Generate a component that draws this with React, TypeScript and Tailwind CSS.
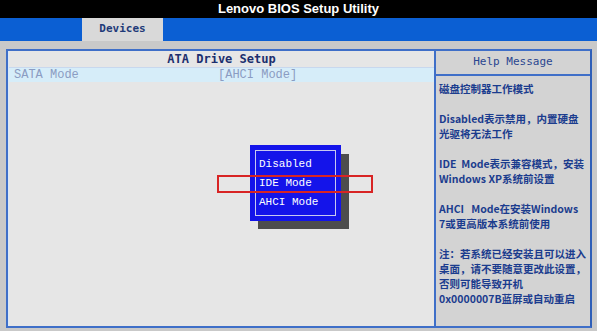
const help = [
  ['磁盘控制器工作模式'],
  ['Disabled表示禁用，内置硬盘', '光驱将无法工作'],
  ['IDE  Mode表示兼容模式，安装', 'Windows XP系统前设置'],
  ['AHCI   Mode在安装Windows', '7或更高版本系统前使用'],
  ['注：若系统已经安装且可以进入', '桌面，请不要随意更改此设置，', '否则可能导致开机', '0x0000007B蓝屏或自动重启'],
];

const options = ['Disabled', 'IDE Mode', 'AHCI Mode'];

export default function App() {
  return (
    <div className="relative w-[597px] h-[331px] overflow-hidden flex flex-col bg-[#c9c9c9]">
      {/* title bar */}
      <div className="h-[18px] bg-black flex items-center justify-center text-white text-[13px] font-bold" style={{ fontFamily: '"Liberation Sans", Arial, sans-serif' }}>
        Lenovo BIOS Setup Utility
      </div>

      {/* menu bar */}
      <div className="h-[23px] bg-[#0b5fd3] flex pl-[82px]">
        <div className="w-[81px] bg-[#d9d9d9] flex items-center justify-center text-[11px] font-bold text-[#1e3a78]" style={{ fontFamily: '"DejaVu Sans Mono", monospace' }}>
          Devices
        </div>
      </div>

      {/* body */}
      <div className="flex-1 pl-[6px] pr-[5px] pt-[8px] pb-[3px]">
        <div className="h-full flex border-2 border-[#3f6fc8] border-r-[#2f5fb8]">
          {/* left panel */}
          <div className="flex-1 flex flex-col bg-[#e6e6e6] border-l border-[#d8e8fa]">
            <div className="h-[17px] flex items-center justify-center text-[12px] font-bold text-[#1c2f6e] border-b border-[#c8d8ee]" style={{ fontFamily: '"DejaVu Sans Mono", monospace' }}>
              ATA Drive Setup
            </div>
            <div className="h-[14px] flex items-center bg-[#d6edf9] text-[12px] text-[#8b9cc2] pl-[5px]" style={{ fontFamily: '"Liberation Mono", monospace' }}>
              <span className="w-[204px]">SATA Mode</span>
              <span>[AHCI Mode]</span>
            </div>
          </div>

          {/* help panel */}
          <div className="w-[156px] flex flex-col bg-[#d3d3d3] border-l-2 border-[#3f6fc8]">
            <div className="h-[25px] flex items-center justify-center text-[11px] text-[#2a4690] border-b-2 border-[#3f6fc8]" style={{ fontFamily: '"DejaVu Sans Mono", monospace' }}>
              Help Message
            </div>
            <div className="flex flex-col gap-[15px] pl-[3px] pt-[5px] text-[10.5px] leading-[15px] font-bold text-[#1b3c8e]" style={{ fontFamily: '"Noto Sans CJK SC", "Noto Sans", sans-serif' }}>
              {help.map((para, i) => (
                <div key={i}>
                  {para.map((line, j) => (
                    <div key={j} className="whitespace-pre">{line}</div>
                  ))}
                </div>
              ))}
            </div>
          </div>
        </div>
      </div>

      {/* popup shadow */}
      <div className="absolute left-[258px] top-[154px] w-[91px] h-[75px] bg-[#4d4d4d]" />

      {/* popup */}
      <div className="absolute left-[250px] top-[145px] w-[91px] h-[76px] bg-[#1414ea] p-[5px]">
        <div className="h-full border border-[#c8c8f0] flex flex-col justify-center pl-[3px] text-white text-[11px] leading-[19px]" style={{ fontFamily: '"Liberation Mono", monospace' }}>
          {options.map((o) => (
            <div key={o}>{o}</div>
          ))}
        </div>
      </div>

      {/* red highlight */}
      <div className="absolute left-[217px] top-[175px] w-[156px] h-[18px] border-2 border-[#d82424]" />
    </div>
  );
}
